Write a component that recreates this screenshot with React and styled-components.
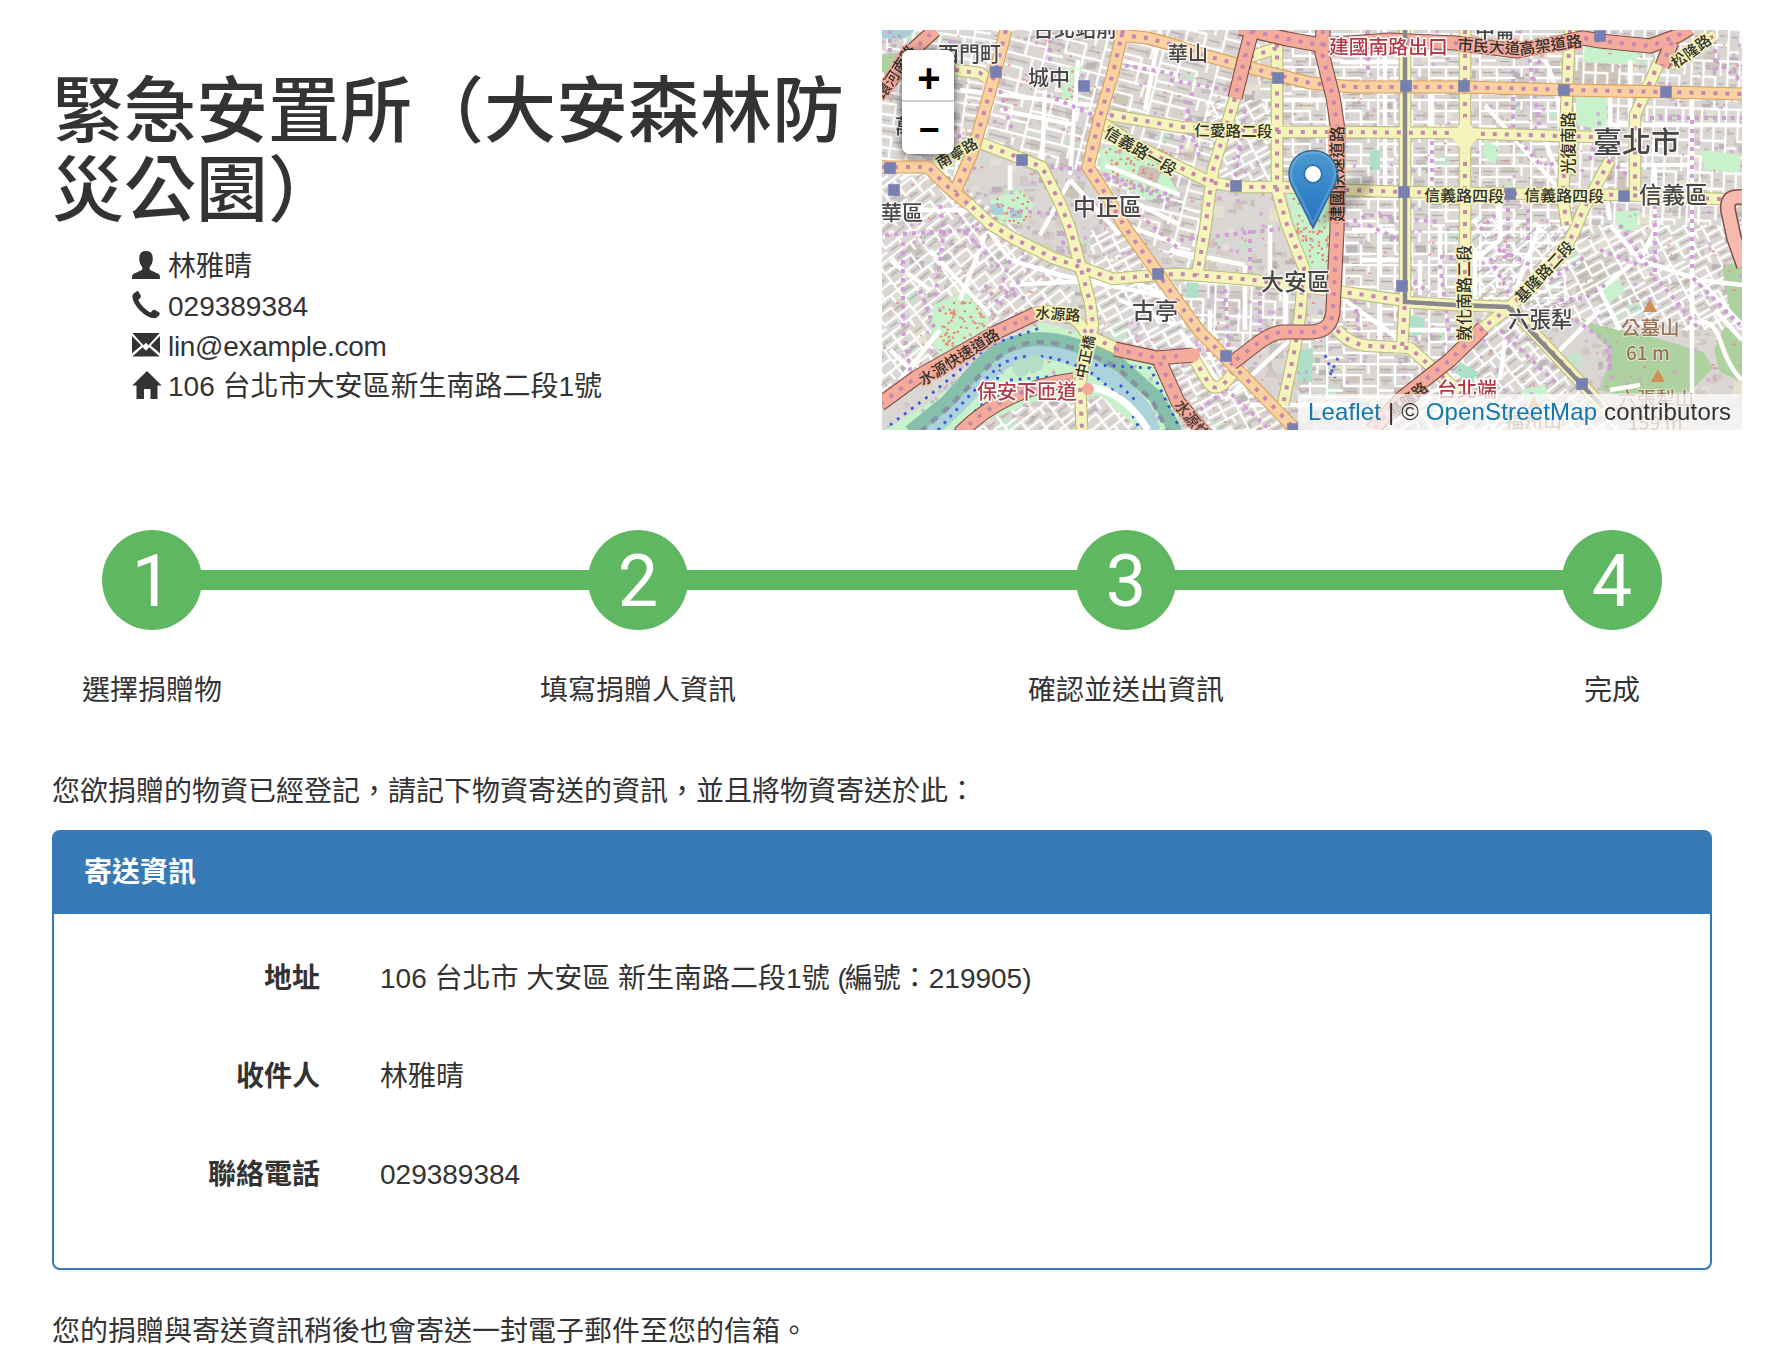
import React from "react";
import styled, { createGlobalStyle } from "styled-components";

const GlobalStyle = createGlobalStyle`
  *, *::before, *::after { box-sizing: border-box; }
  body {
    margin: 0;
    background: #fff;
    color: #333;
    font-family: "Liberation Sans", "Noto Sans CJK TC", sans-serif;
    font-size: 28px;
    line-height: 40px;
  }
`;

const Page = styled.main`
  width: 1792px;
  height: 1364px;
  overflow: hidden;
  padding: 30px 50px 0 52px;
  display: flex;
  flex-direction: column;
`;
const Header = styled.header`
  display: grid;
  grid-template-columns: 830px 860px;
  height: 400px;
`;
const Title = styled.h1`
  margin: 35px 0 24px;
  font-size: 72px;
  line-height: 79px;
  font-weight: 500;
  font-family: "Noto Sans CJK TC", sans-serif;
`;
const ContactList = styled.ul`
  list-style: none;
  margin: 0;
  padding: 0 0 0 80px;
`;
const ContactItem = styled.li`
  display: flex;
  align-items: center;
  gap: 8px;
  height: 40px;
  white-space: nowrap;
  letter-spacing: ${(p) => (p.$tight ? "-0.3px" : "normal")};
`;
const Glyph = styled.svg`
  width: 28px;
  height: 28px;
  flex: none;
  margin-top: -5px;
  fill: #333;
  overflow: visible;
`;
const MapFrame = styled.section`
  position: relative;
  width: 860px;
  height: 400px;
  overflow: hidden;
  background: #ddd;
`;
const MapCanvas = styled.svg`
  display: block;
  width: 860px;
  height: 400px;
`;
const ZoomControl = styled.div`
  position: absolute;
  left: 20px;
  top: 20px;
  width: 52px;
  border-radius: 8px;
  background: #fff;
  box-shadow: 0 2px 10px rgba(0, 0, 0, 0.65);
  overflow: hidden;
`;
const ZoomButton = styled.button`
  display: flex;
  align-items: center;
  justify-content: center;
  width: 52px;
  height: 52px;
  padding: ${(p) => (p.$divided ? 5 : 3)}px 0 0 2px;
  border: 0;
  border-bottom: ${(p) => (p.$divided ? "2px solid #ccc" : "0")};
  background: #fff;
  color: #000;
  font: bold ${(p) => (p.$divided ? 40 : 36)}px/46px "Liberation Sans", sans-serif;
`;
const Attribution = styled.div`
  position: absolute;
  right: 0;
  bottom: 0;
  width: 444px;
  height: 36px;
  padding: 0 10px;
  background: rgba(255, 255, 255, 0.7);
  font-size: 24px;
  line-height: 35px;
  letter-spacing: 0.15px;
  white-space: nowrap;
`;
const MapLink = styled.a`
  color: #1279a8;
  text-decoration: none;
`;
const Steps = styled.ol`
  list-style: none;
  margin: 100px 0 0 -143px;
  padding: 0;
  display: grid;
  grid-template-columns: 486px 486px 490px 482px;
`;
const Step = styled.li`
  display: flex;
  flex-direction: column;
  align-items: center;
`;
const StepTrack = styled.div`
  display: grid;
  grid-template-columns: 1fr 100px 1fr;
  align-items: center;
  width: 100%;
`;
const Bar = styled.span`
  height: 20px;
  margin: 0 -4px;
  background: ${(p) => (p.$shown ? "#60b761" : "transparent")};
`;
const StepCircle = styled.span`
  width: 100px;
  height: 100px;
  border-radius: 50%;
  background: #60b761;
  color: #fff;
  font-family: Roboto, "Liberation Sans", sans-serif;
  font-size: 72px;
  line-height: 103px;
  text-align: center;
`;
const StepLabel = styled.span`
  margin-top: 41px;
`;
const Message = styled.p`
  margin: ${(p) => p.$top}px 0 0;
  white-space: nowrap;
`;
const Panel = styled.section`
  width: 1660px;
  height: 440px;
  margin-top: 18px;
  border: 2px solid #367ab6;
  border-radius: 8px;
  box-shadow: 0 2px 2px rgba(0, 0, 0, 0.05);
`;
const PanelHeading = styled.h2`
  margin: 0;
  height: 82px;
  padding: 21px 30px;
  border-radius: 5px 5px 0 0;
  background: #367ab6;
  color: #fff;
  font-size: 28px;
  font-weight: 700;
`;
const Details = styled.dl`
  margin: 0;
  padding-top: 45px;
  display: grid;
  grid-template-columns: 266px 1fr;
  column-gap: 60px;
  row-gap: 58px;
`;
const Term = styled.dt`
  text-align: right;
  font-weight: 700;
`;
const Value = styled.dd`
  margin: 0;
`;
const Paren = styled.span`
  letter-spacing: -2px;
`;

/* ---------- map drawing ---------- */

const ROADS = {
  salmon: { edge: "#7d5049", fill: "#f4ab9b", w: 13 },
  orange: { edge: "#d9a05c", fill: "#fad1a0", w: 11 },
  yellow: { edge: "#bdbb80", fill: "#f5f5bb", w: 10.5 },
};

const yellowRoads = [
  "M955 70L980 73 988 79",
  "M955 190L965 200 990 224 1013 238 1053 258 1080 267 1113 279 1157 275 1180 274 1253 280 1303 287 1343 292 1400 300",
  "M978 142L1020 158 1042 167 1060 203 1070 228 1080 265 1090 302 1093 325 1083 365 1080 385 1082 430",
  "M1110 115L1180 127 1277 132 1330 132 1453 133 1597 137",
  "M1098 120L1135 145 1177 166 1210 182 1237 187 1277 187 1347 190 1403 192 1623 195 1742 200",
  "M1250 57L1277 48 1277 30V190L1287 225 1304 268 1300 315 1295 348 1283 405",
  "M1235 98L1225 130 1213 170 1205 230 1197 275",
  "M1193 357L1208 382Q1217 396 1232 374",
  "M1465 30V345",
  "M1405 30V300L1402 348",
  "M1337 330Q1350 345 1370 346L1410 348 1437 372 1465 397",
  "M1570 30L1567 90 1563 200 1567 225",
  "M1660 60L1635 115V190",
  "M1610 160L1583 210 1575 230 1562 255 1510 307 1480 330",
  "M1403 302L1455 305 1510 307 1583 385 1605 410",
  "M1030 314Q1072 304 1087 335L1120 350",
  "M1670 65L1715 35",
];
const orangeRoads = [
  "M1006 30L995 73 987 102 977 137 972 153 955 192",
  "M882 167H928L948 187 968 204",
  "M1123 30L1113 73 1100 117 1088 167 1103 190 1125 227 1157 272 1180 305 1200 332 1230 362 1293 427",
  "M1120 35L1147 38 1170 44 1207 56 1270 73 1310 83 1353 87 1464 87 1567 90 1667 92 1742 94",
];
const salmonRoads = [
  "M882 92L897 72 915 48 935 30",
  "M1252 30L1245 57 1235 98",
  "M1240 28L1287 39 1320 45 1390 40 1455 43 1517 51 1583 38 1600 41 1650 46 1677 36 1690 28",
  "M1323 30L1322 53 1333 97 1338 130 1337 230 1333 310Q1332 331 1312 332H1282Q1272 333 1258 343L1232 363",
  "M880 404L917 377 997 332 1035 314",
  "M1115 349L1157 358 1193 355",
  "M1160 362L1178 402 1206 435",
  "M960 433Q1005 388 1073 380",
  "M1483 328L1450 360 1403 397 1372 430",
  "M1672 42L1662 66",
];

const purplePaths = [
  "M885 235L1000 228M903 242V330L912 380M944 230L935 300M1035 70L1060 78M1047 95L1100 118M1050 167L1090 170 1170 195",
  "M1010 210L1065 215 1062 260M1098 175L1170 200M1116 64L1180 75M1050 30V62M890 30V58M947 110L975 170",
  "M1170 80L1240 92M1192 92L1180 155M1180 240L1280 229M1225 280L1228 350M1250 230V280M1260 292V340",
  "M1368 30V75M1432 132V192M1345 225L1368 215 1440 222M1368 225L1400 240M1355 300L1360 340",
  "M1513 70V132L1540 165M1528 50L1540 130M1508 190V260L1495 245M1528 200V240M1550 165L1580 150",
  "M1692 120V270M1650 118H1742M1693 278L1740 325M1715 60L1740 80M1655 205V285",
  "M1575 320L1605 340 1612 380M1560 300L1585 298 1605 285M1610 160L1655 200M1500 330L1558 385M1440 257H1472",
  "M940 205L945 240M1000 305L1020 280M985 285L1000 305M1170 350H1210M1225 388L1270 430M1200 410L1225 390",
  "M1410 257V280L1430 292M1440 265L1450 340M1490 258L1510 295M1502 250L1530 265M1550 280L1588 255",
  "M950 40L955 75M1000 90L1012 130M1140 215L1180 250M1185 100L1200 160M1245 110L1235 180M1010 260L1000 290 1030 300M1715 40V70M1620 225L1650 270M1590 160L1600 120",
  "M920 290L935 330M965 232L1000 268M1480 230L1495 215M1660 282L1700 330M1610 345V370M1540 60L1530 90M1600 250L1640 265",
];

const minorStreets = [
  "M960 90L1090 105M1000 110L1075 125M1045 90L1042 165M1078 60L1070 175M1105 165L1180 195M1130 200L1180 225",
  "M1070 180L1040 235M1070 180L1120 235M1010 165V190M900 180L920 165M885 210H980M985 225L1010 260 1060 275 1180 300",
  "M1160 30L1145 110M1120 60L1180 75M1280 30V130M1285 100H1330M1340 90V190M1385 30V185M1432 90V190M1340 62H1400",
  "M1485 105L1560 190M1545 60Q1560 90 1560 130M1545 140L1562 185M1610 95V125H1740M1630 60V120M1692 90V400",
  "M1475 260L1500 240 1500 200M1475 250V300M1500 380L1505 340M1610 225L1640 260 1700 280 1742 285M1660 220L1640 260",
  "M1604 180L1610 220M1620 165H1690M1655 165V220M1550 360L1600 310M1610 390L1640 385M1700 280L1742 325M1715 310L1742 340",
  "M1620 330L1600 290 1630 265M1685 330Q1710 310 1720 340T1742 380M1540 225L1512 300",
  "M890 260L930 290M930 250L990 315M985 235L960 300M1010 285L1110 280M900 380L940 330M890 350L920 378",
  "M1125 225L1180 245M1130 240L1150 260M1130 280L1180 302M1120 300L1175 325M1170 250L1245 265M1245 265V330",
  "M1180 330L1225 390M1210 310V360M1225 400L1290 340M1250 405H1350M1270 225V275M1285 280V330M1345 300L1400 340",
  "M1352 230H1395M1380 225V275M1360 260H1400M1420 260V295M1440 225V300M1405 330H1465M1380 295V345",
];

const greens = [
  "M933 305L970 290 990 315 987 328 940 355 930 342Z",
  "M1100 150L1125 140 1165 170 1178 192 1150 200 1128 190 1118 177 1100 170Z",
  "M1286 190L1330 186 1330 268 1306 268 1296 232Z",
  "M885 430L925 405 960 380 1000 348 1040 322 1085 334 1130 350 1165 375 1182 430 1140 430 1100 395 1040 400 960 430Z",
  "M990 200L1020 190 1035 205 1020 225 1000 222Z",
  "M1063 68L1082 66 1078 100 1062 105Z",
  "M1575 95L1610 98 1605 130 1578 125Z",
  "M1585 45L1640 48 1635 65 1583 62Z",
  "M1600 285L1615 275 1625 290 1608 305Z",
  "M1700 150L1740 155V172L1705 170Z",
  "M1615 212L1640 210 1636 230H1618Z",
  "M1485 140L1500 148 1495 165 1482 155Z",
  "M1520 390L1545 385 1550 400H1525Z",
];
const courts = [
  "M1298 350L1313 348 1312 382 1297 382Z",
  "M1370 150H1380V170H1370Z",
  "M1410 315L1425 318 1422 335H1408Z",
  "M1187 282L1199 283 1197 298H1186Z",
  "M1460 362L1478 372 1470 385 1455 372Z",
];
const forests = [
  "M1580 318L1600 326 1650 336 1703 352 1713 368 1690 392 1623 396 1600 390 1612 352Z",
  "M1725 326L1742 338V382L1720 372 1714 350Z",
  "M1722 268L1742 260V322L1730 310Z",
  "M882 55Q900 50 900 68L890 75 882 72Z",
];

const stations = [
  [996, 72], [1084, 86], [1022, 160], [890, 168], [894, 190], [1278, 78], [1406, 86],
  [1464, 86], [1236, 186], [1404, 192], [1600, 36], [1564, 90], [1666, 92], [1510, 194],
  [1624, 196], [1158, 274], [1226, 356], [1402, 286], [1293, 429], [1582, 384],
];

const districts = [
  { d: "M882 30H1010L955 190 882 167Z", p: "a" },
  { d: "M1010 30H1123L1088 170 1042 167 978 142Z", p: "b" },
  { d: "M882 170H945L1050 258 1080 300 1030 314 882 404Z", p: "c" },
  { d: "M1123 30H1250L1197 275 1125 227 1088 167Z", p: "b" },
  { d: "M1205 100H1277V187L1213 182Z", p: "d" },
  { d: "M1250 30H1335V190H1277Z", p: "e" },
  { d: "M1335 30H1567V305H1335Z", p: "e" },
  { d: "M1567 30H1742V225H1567Z", p: "f" },
  { d: "M1090 230L1125 227 1300 430H1180L1160 362 1093 325Z", p: "d" },
  { d: "M1197 275L1303 285V332L1230 362 1170 290Z", p: "f" },
  { d: "M1335 292L1465 305V400H1300L1300 335Z", p: "e" },
  { d: "M1465 215L1567 225 1510 307 1620 430H1372L1483 328Z", p: "c" },
  { d: "M1567 225H1742V330L1620 330 1510 307Z", p: "d" },
  { d: "M965 430L1020 395 1080 385 1130 400 1155 430Z", p: "c" },
];
const patterns = [
  { id: "a", w: 17, h: 11, r: 8 },
  { id: "b", w: 19, h: 13, r: 14 },
  { id: "c", w: 16, h: 10, r: -38 },
  { id: "d", w: 15, h: 9, r: -28 },
  { id: "e", w: 17, h: 11, r: 0 },
  { id: "f", w: 12, h: 16, r: 2 },
];

const labels = [
  [1033, 36, 21, "台北站前"], [938, 61, 21, "西門町"], [1028, 85, 21, "城中"],
  [1168, 61, 20, "華山"], [860, 220, 21, "萬華區"], [1073, 215, 23, "中正區"],
  [1261, 290, 23, "大安區"], [1132, 319, 23, "古亭"], [1593, 153, 29, "臺北市"],
  [1639, 203, 23, "信義區"], [1508, 327, 21.5, "六張犁"], [1475, 38, 20, "中崙"], [895, 134, 20, "萬"],
];
const roadLabels = [
  [1194, 136, 15.7, "仁愛路二段", 1], [1103, 136, 16, "信義路一段", 30],
  [1424, 201, 16, "信義路四段", 1], [1524, 201, 16, "信義路四段", 1],
  [1522, 304, 15.5, "基隆路二段", -47], [1470, 341, 16, "敦化南路二段", -90],
  [1574, 174, 15.5, "光復南路", -90], [1343, 222, 16, "建國快速道路", -90],
  [923, 386, 15.3, "水源快速道路", -32], [1035, 318, 15, "水源路", 4],
  [1086, 379, 14.5, "中正橋", -78], [1174, 405, 15, "水源快速", 52],
  [940, 169, 15, "南寧路", -30], [1676, 69, 15, "松隆路", -36],
  [1457, 50, 15.8, "市民大道", 4], [1520, 55, 15.8, "高架道路", -8],
  [884, 100, 15, "環河南路", -57], [1394, 418, 15, "基隆路", -39],
];
const redLabels = [
  [1329, 54, 19.8, "建國南路出口"], [977, 399, 20, "保安下匝道"], [1437, 397, 20, "台北端"],
];
const hillLabels = [
  [1621, 335, 19.5, "公墓山"], [1626, 360, 19, "61 m"], [1618, 406, 19, "六張犁山"],
  [1505, 428, 19, "福州山"], [1628, 430, 19, "159 m"],
];

function scatter(count, seed) {
  let s = seed;
  const next = () => {
    s = (s * 16807) % 2147483647;
    return s / 2147483647;
  };
  return Array.from({ length: count }, () => [882 + next() * 860, 30 + next() * 400, next(), next()]);
}
const buildings = scatter(380, 731);
const redDots = scatter(620, 977);
const purpleDots = scatter(420, 3163);
const lots = scatter(1500, 4271);
const parks = [
  [1292, 1328, 188, 266],
  [1105, 1165, 148, 190],
  [938, 985, 298, 345],
  [992, 1028, 194, 222],
  [1064, 1078, 68, 102],
];
const parkDots = scatter(9000, 5501).filter(([x, y]) =>
  parks.some(([x0, x1, y0, y1]) => x > x0 && x < x1 && y > y0 && y < y1)
);
const lotColors = ["#c6c1bf", "#d0c7c1", "#e4dfda", "#b9b6b5", "#d5cbc5"];
const buildingColors = ["#d1c6bd", "#c8e3cc", "#d9d0c9", "#c9c5c2", "#e4e1cf", "#cfc4bd", "#d2cad0"];

const MapText = styled.text`
  font-family: "Noto Sans CJK TC", "Open Sans", sans-serif;
  font-weight: ${(p) => p.$weight || 400};
  fill: ${(p) => p.$fill};
  stroke: ${(p) => p.$halo};
  stroke-width: ${(p) => p.$haloWidth || 3}px;
  stroke-linejoin: round;
  paint-order: stroke;
`;
const MapTile = styled.g`
  filter: blur(0.55px);
`;

function Roads({ kind, paths }) {
  const { edge, fill, w } = ROADS[kind];
  const shared = { fill: "none", strokeLinejoin: "round" };
  return (
    <g>
      {paths.map((d) => <path key={`e${d}`} d={d} stroke={edge} strokeWidth={w + 2.2} {...shared} />)}
      {paths.map((d) => <path key={`f${d}`} d={d} stroke={fill} strokeWidth={w} {...shared} />)}
      {paths.map((d) => (
        <path key={`p${d}`} d={d} stroke="#c587ac" strokeWidth="4" strokeDasharray="4 8" {...shared} />
      ))}
    </g>
  );
}

function StreetMap() {
  return (
    <MapCanvas viewBox="882 30 860 400" aria-label="map">
      <defs>
        {patterns.map(({ id, w, h, r }) => (
          <pattern key={id} id={`blocks-${id}`} width={w * 3} height={h * 3} patternUnits="userSpaceOnUse" patternTransform={`rotate(${r})`}>
            <path
              d={`M0 1H${w * 3}M0 ${h + 1}H${w * 2}M${w} ${h * 2 + 1}H${w * 3}M0 ${h * 2.5}H${w}M1 0V${h * 3}M${w + 1} 0V${h * 2}M${w * 2 + 1} ${h}V${h * 3}M${w * 2.5} 0V${h}`}
              stroke="#fff" strokeWidth="2.3" fill="none"
            />
            <path
              d={`M4 ${h / 2 + 1}H${w - 3}M${w + 4} ${h / 2 + 1}H${w * 2.3}M4 ${h * 1.5 + 1}H${w - 2}M${w * 2 + 4} ${h * 1.5}H${w * 3 - 3}M${w + 4} ${h * 2.6}H${w * 2 - 3}`}
              stroke="#b3afad" strokeWidth="1.3" fill="none"
            />
          </pattern>
        ))}
        <linearGradient id="pin" x1="0" y1="0" x2="0" y2="1">
          <stop offset="0" stopColor="#4c99cf" />
          <stop offset="1" stopColor="#2272c1" />
        </linearGradient>
        <filter id="soft" x="-30%" y="-30%" width="160%" height="160%">
          <feGaussianBlur stdDeviation="3" />
        </filter>
      </defs>
      <MapTile>
        <rect x="872" y="20" width="880" height="420" fill="#dad6d3" />
        {lots.map(([x, y, a, b], i) => (
          <rect key={i} x={x} y={y} width={3 + a * 8} height={2 + b * 6} fill={lotColors[i % 5]} />
        ))}
        {buildings.map(([x, y, a, b], i) => (
          <rect key={i} x={x} y={y} width={5 + a * 14} height={5 + b * 10} fill={buildingColors[i % 7]} />
        ))}
        <path d="M1575 62L1625 60V85H1573ZM1545 62H1560V75H1545ZM1617 170H1630V190H1613Z" fill="#cfc4bb" />
        <path d="M1580 260L1610 265V295H1575ZM1110 90H1130L1125 115H1112Z" fill="#c9c6ba" />
        {districts.map(({ d, p }) => <path key={d} d={d} fill={`url(#blocks-${p})`} />)}
        {greens.map((d) => <path key={d} d={d} fill="#c8f2cb" />)}
        {courts.map((d) => <path key={d} d={d} fill="#aedfc8" />)}
        {forests.map((d) => <path key={d} d={d} fill="#aed1a0" />)}
        <path d="M1065 183L1080 190 1078 200 1062 195ZM1140 165L1162 170 1155 188 1135 180Z" fill="#c9c2b6" />
        <path d="M882 30H915L902 40 882 38ZM990 205L1003 203V215H993ZM1010 210H1022V218H1010Z" fill="#a9d0da" />
        {redDots.map(([x, y, a], i) => (
          <rect key={i} x={x} y={y} width={a > 0.7 ? 3 : 1.8} height="1.8" fill="#e8867a" opacity="0.8" />
        ))}
        {purpleDots.map(([x, y], i) => (
          <rect key={i} x={x} y={y} width="3.4" height="3.4" fill="#cfa3d6" opacity="0.8" />
        ))}
        {parkDots.map(([x, y], i) => (
          <rect key={i} x={x} y={y} width="2.4" height="2" fill="#ee8474" />
        ))}
        <g fill="none" stroke="#fff" strokeWidth="4.5" strokeLinejoin="round">
          {minorStreets.map((d) => <path key={d} d={d} />)}
        </g>
        <g fill="none">
          <path d="M928 432L957 405 985 375Q1010 350 1040 350T1113 378L1143 410 1152 432" stroke="#acd2dc" strokeWidth="18" />
          <path d="M910 432L947 402 980 365Q1007 339 1040 339T1120 365L1157 398 1176 432" stroke="#86c0ab" strokeWidth="14" />
          <path d="M920 432L950 406 984 371Q1010 342 1040 342T1118 368L1152 400 1168 432" stroke="#8793a5" strokeWidth="4.5" strokeDasharray="8 7" />
          <path d="M938 430L970 395 1000 365Q1035 344 1090 372L1125 400 1140 430M955 430L985 402M990 405L1000 370M1010 380L1070 375M890 425L930 395 990 345 1040 328M1095 365L1150 368 1178 425M1120 385L1135 400" stroke="#3654de" strokeWidth="2.8" strokeDasharray="2.8 6" />
        </g>
        <circle cx="1021" cy="368" r="9" fill="#b5dfc4" />
        <circle cx="1035" cy="363" r="9" fill="#b5dfc4" />
        <path d="M1080 387Q1120 385 1148 430" fill="none" stroke="#fff" strokeWidth="7" />
        <g fill="none" stroke="#cf9fd6" strokeWidth="4" strokeDasharray="4 5">
          {purplePaths.map((d) => <path key={d} d={d} />)}
        </g>
        <Roads kind="yellow" paths={yellowRoads} />
        <path d="M1465 116L1474 130 1480 136 1474 142 1465 156 1456 142 1449 136 1456 130Z" fill="#f5f5bb" />
        <Roads kind="orange" paths={orangeRoads} />
        <Roads kind="salmon" paths={salmonRoads} />
        <path d="M1405 30V302L1455 305 1508 307 1600 404" fill="none" stroke="#8a888c" strokeWidth="4.5" />
        <path d="M1746 198Q1726 193 1728 210L1734 238 1744 266" fill="none" stroke="#7b514a" strokeWidth="16" />
        <path d="M1746 198Q1726 193 1728 210L1734 238 1744 266" fill="none" stroke="#f8b9ae" strokeWidth="13" />
        <circle cx="1088" cy="389" r="6" fill="#f4ab9b" />
        <circle cx="1193" cy="355" r="7" fill="#f4ab9b" />
        <path d="M1325 355L1335 378M1338 358L1330 375" stroke="#4d65d8" strokeWidth="3" strokeDasharray="3 5" />
        {stations.map(([x, y]) => (
          <rect key={`${x}-${y}`} x={x - 5.8} y={y - 5.8} width="11.6" height="11.6" fill="#7880b1" />
        ))}
        <path d="M1650 299L1657 312H1643ZM1658 369L1665 382H1651ZM1534 396L1541 409H1527Z" fill="#d08f58" />
        {roadLabels.map(([x, y, size, text, angle]) => (
          <MapText key={`${text}${x}`} transform={`translate(${x} ${y}) rotate(${angle})`} fontSize={size} $weight={500} $fill="#33302b"
            $halo={/建國|快速|市民|高架|環河|^基隆路$/.test(text) ? "#f4ab9b" : "#f5f5bb"}>
            {text}
          </MapText>
        ))}
        {labels.map(([x, y, size, text]) => (
          <MapText key={text} x={x} y={y} fontSize={size} $weight={500} $fill="#474747" $halo="rgba(255,255,255,0.7)">{text}</MapText>
        ))}
        {redLabels.map(([x, y, size, text]) => (
          <MapText key={text} x={x} y={y} fontSize={size} $weight={500} $fill="#b33a48" $halo="#fff">{text}</MapText>
        ))}
        {hillLabels.map(([x, y, size, text]) => (
          <MapText key={text} x={x} y={y} fontSize={size} $weight={500} $fill="#9c7355" $halo="rgba(255,255,255,0.5)" $haloWidth={2}>{text}</MapText>
        ))}
      </MapTile>
      <path d="M1315 229L1332 196Q1352 168 1370 178 1380 190 1350 206Z" fill="#000" opacity="0.22" filter="url(#soft)" />
      <path
        d="M1313 228L1294 190Q1289 182 1289 174C1289 160 1300 150.500 1313 150.500S1337 160 1337 174Q1337 182 1332 190Z"
        fill="url(#pin)" stroke="#2e6c97" strokeWidth="1.5"
      />
      <path
        d="M1313 223L1296 189Q1291 181 1291 174C1291 161 1301 152.500 1313 152.500S1335 161 1335 174Q1335 181 1330 189Z"
        fill="none" stroke="#fff" strokeOpacity="0.16" strokeWidth="2.5"
      />
      <circle cx="1313" cy="174" r="8.800" fill="#fff" stroke="#2e74ab" strokeWidth="1.8" />
    </MapCanvas>
  );
}

/* ---------- contact glyphs ---------- */

const glyphs = {
  user: <path d="M14 0C9.200 0 7.200 3 7.200 7.500 7.200 11 8.300 14 10.300 16V18.500C8.500 20.300 1.500 22.300 .6 23.800 0 25 0 26.500 0 28H28C28 26.500 28 25 27.400 23.800 26.500 22.300 19.500 20.300 17.700 18.500V16C19.700 14 20.800 11 20.800 7.500 20.800 3 18.800 0 14 0Z" />,
  phone: <path d="M4.500 .4C5.200-.1 6-.1 6.500 .6L8.700 4.600C9.100 5.400 9 6.200 8.300 6.900L6.300 9C7.500 12.700 15 20.200 18.600 21.400L20.700 19.300C21.300 18.600 22.200 18.500 23 19L27.200 21.600C28 22.100 28 22.800 27.500 23.500 26.500 25 24.700 27.300 22.300 27.300 14 27.300 .4 14.500 .4 5.100 .4 3.300 2.500 1.600 4.500 .4Z" />,
  envelope: <path d="M.3 2H27.700L16.500 14.300 14 11.700 11.500 14.300ZM0 5L9.300 14.500 0 22.300ZM28 5L18.700 14.500 28 22.300ZM10.700 16.200L13.700 19.400H14.300L17.300 16.200 27.700 25.600H.3Z" />,
  home: <path d="M15 0L29.700 14.500H25.500V28H18.500V18H12V28H4.500V14.500H.3Z" />,
};

const contacts = [
  ["user", "林雅晴"],
  ["phone", "029389384"],
  ["envelope", "lin@example.com"],
  ["home", "106 台北市大安區新生南路二段1號"],
];
const steps = ["選擇捐贈物", "填寫捐贈人資訊", "確認並送出資訊", "完成"];
const details = [
  ["地址", <>106 台北市 大安區 新生南路二段1號 <Paren>(</Paren>編號：219905)</>],
  ["收件人", "林雅晴"],
  ["聯絡電話", "029389384"],
];

export default function App() {
  return (
    <>
      <GlobalStyle />
      <Page lang="zh-Hant">
        <Header>
          <div>
            <Title>緊急安置所（大安森林防災公園）</Title>
            <ContactList>
              {contacts.map(([icon, text]) => (
                <ContactItem key={icon} $tight={icon === "envelope"}>
                  <Glyph viewBox="0 0 28 28" aria-hidden="true">{glyphs[icon]}</Glyph>
                  <span>{text}</span>
                </ContactItem>
              ))}
            </ContactList>
          </div>
          <MapFrame>
            <StreetMap />
            <ZoomControl>
              <ZoomButton $divided>+</ZoomButton>
              <ZoomButton>−</ZoomButton>
            </ZoomControl>
            <Attribution>
              <MapLink>Leaflet</MapLink> | © <MapLink>OpenStreetMap</MapLink> contributors
            </Attribution>
          </MapFrame>
        </Header>
        <Steps>
          {steps.map((label, i) => (
            <Step key={label}>
              <StepTrack>
                <Bar $shown={i > 0} />
                <StepCircle>{i + 1}</StepCircle>
                <Bar $shown={i < steps.length - 1} />
              </StepTrack>
              <StepLabel>{label}</StepLabel>
            </Step>
          ))}
        </Steps>
        <Message $top={61}>您欲捐贈的物資已經登記，請記下物資寄送的資訊，並且將物資寄送於此：</Message>
        <Panel>
          <PanelHeading>寄送資訊</PanelHeading>
          <Details>
            {details.map(([term, value]) => (
              <React.Fragment key={term}>
                <Term>{term}</Term>
                <Value>{value}</Value>
              </React.Fragment>
            ))}
          </Details>
        </Panel>
        <Message $top={42}>您的捐贈與寄送資訊稍後也會寄送一封電子郵件至您的信箱。</Message>
      </Page>
    </>
  );
}
